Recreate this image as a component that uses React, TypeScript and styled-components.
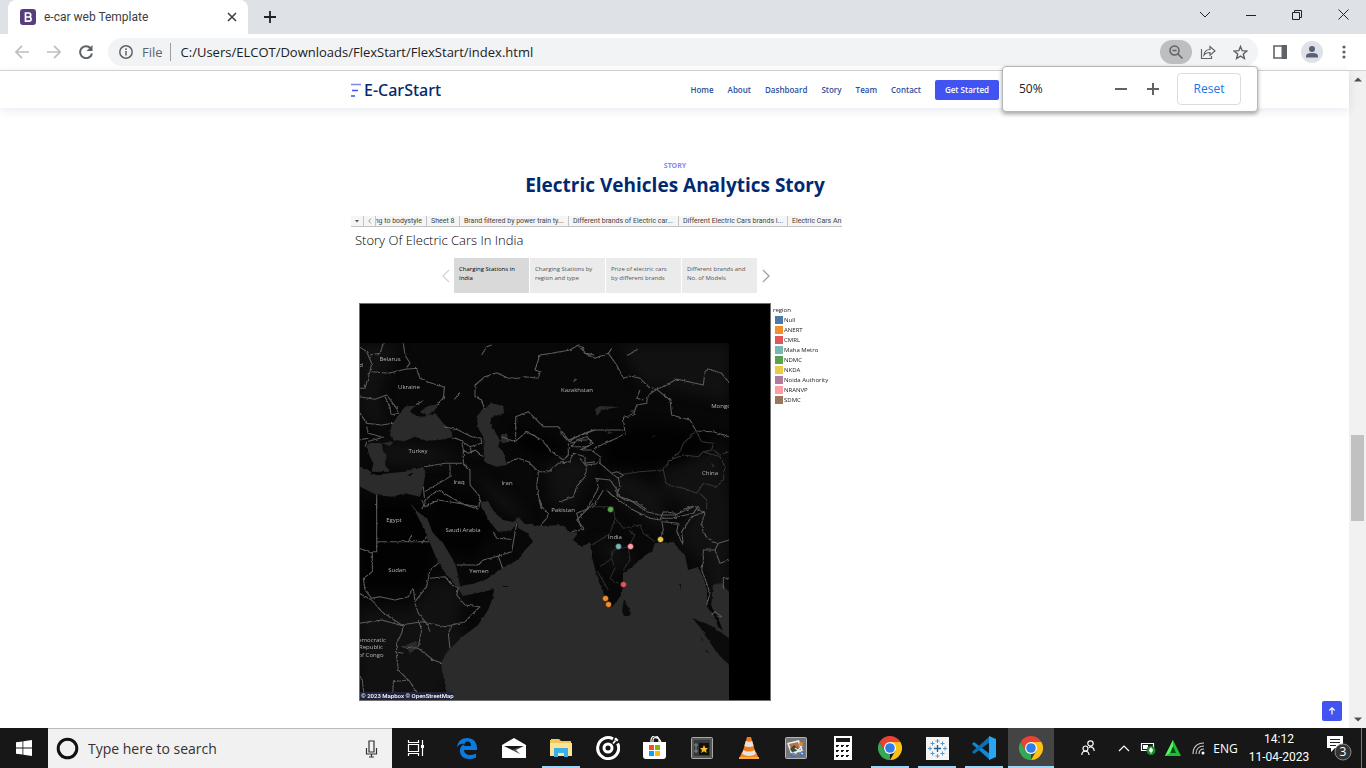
import React from 'react';
import styled, { createGlobalStyle } from 'styled-components';

const UI = '"Open Sans", "Noto Sans", sans-serif';

const Global = createGlobalStyle`
  * { box-sizing: border-box; }
  body { margin: 0; background: #fff; font-family: ${UI}; color: #202124; }
  button { border: 0; padding: 0; margin: 0; background: none; font: inherit; color: inherit; display: flex; align-items: center; justify-content: center; }
  a { text-decoration: none; color: inherit; }
  svg { display: block; flex: none; }
  h1, h2, p, ul { margin: 0; padding: 0; }
`;

const Desktop = styled.div`display: flex; flex-direction: column; min-height: 100vh; overflow: hidden;`;

/* browser frame */
const TabStrip = styled.div`display: flex; height: 34px; background: #dee1e6; padding-left: 8px;`;
const Tab = styled.div`
  display: flex; align-items: center; width: 240px; padding: 0 10px 0 12px;
  background: #fff; border-radius: 8px 8px 0 0; font-size: 12px; color: #3c4043;
`;
const TabTitle = styled.span`flex: 1; margin-left: 8px; font-family: Roboto, sans-serif; white-space: nowrap;`;
const NewTab = styled.button`width: 44px;`;
const WindowButtons = styled.div`display: flex; margin-left: auto; height: 29px;`;
const WindowButton = styled.button`width: 46px;`;

const Toolbar = styled.div`
  position: relative; display: flex; align-items: center; height: 37px; padding: 0 6px;
  background: #fff; border-bottom: 1px solid #d5d6d8;
`;
const ToolButton = styled.button<{ $w?: number }>`width: ${p => p.$w ?? 32}px; height: 32px; color: #5f6368;`;
const Omnibox = styled.div`
  display: flex; align-items: center; flex: 1; height: 28px; margin-left: 6px; padding: 0 2px 0 10px;
  border-radius: 14px; background: #f1f3f4;
`;
const Scheme = styled.span`
  margin-left: 8px; padding-right: 7px; border-right: 1px solid #9aa0a6; font: 13px/18px ${UI}; color: #5f6368;
`;
const Address = styled.input`
  flex: 1; min-width: 0; border: 0; outline: 0; background: none; padding: 0 0 0 10px; font: 13px/20px ${UI}; color: #202124;
`;
const ZoomButton = styled.button`width: 32px; height: 24px; border-radius: 12px; background: #bdbec0; color: #5f6368;`;
const Avatar = styled.button`width: 22px; height: 22px; margin-right: 5px; border-radius: 50%; background: #dee1e6;`;

const ZoomPopup = styled.div`
  position: absolute; z-index: 5; top: 32px; right: 108px; display: flex; align-items: center;
  width: 256px; height: 46px; padding: 0 16px; background: #fff; border: 1px solid #b4b6b8; border-radius: 4px;
  box-shadow: 0 2px 4px rgba(0,0,0,.35); font: 12px/16px ${UI};
`;
const ZoomValue = styled.span`flex: 1;`;
const ZoomStep = styled.button`width: 32px; height: 32px;`;
const ResetButton = styled.button`
  width: 64px; height: 32px; margin-left: 8px; border: 1px solid #dadce0; border-radius: 4px; color: #1a73e8;
`;

/* page */
const Viewport = styled.div`display: flex; flex: 1;`;
const Page = styled.main`position: relative; flex: 1; min-width: 0; background: #fff;`;
const ScrollTrack = styled.div`
  display: flex; flex-direction: column; align-items: center; width: 17px; background: #f1f1f1;
`;
const ScrollSpace = styled.div<{ $grow: number }>`flex: ${p => p.$grow} 1 0;`;
const ScrollThumb = styled.div`width: 13px; height: 86px; background: #c1c1c1;`;
const ScrollArrow = styled.button`width: 17px; height: 17px;`;

const SiteHeader = styled.header`height: 37px; background: #fff; box-shadow: 0 2px 10px rgba(1,41,112,.1);`;
const Container = styled.div`width: 649px; max-width: 100%; margin: 0 auto; padding-left: 1px;`;
const HeaderRow = styled(Container)`display: flex; align-items: center; height: 37px;`;
const Logo = styled.a`
  display: flex; align-items: center; gap: 3px; margin-right: auto; color: #012970;
  font: 500 16px/18px "Noto Sans", sans-serif;
`;
const Nav = styled.nav`display: flex; align-items: center; gap: 14px; font: 600 8px/10px "Open Sans", sans-serif; color: #2d4f98;`;
const GetStarted = styled.a`
  display: flex; align-items: center; justify-content: center; width: 64px; height: 20px; border-radius: 2px;
  background: #4154f1; color: #fff;
`;

const Story = styled.section`padding-top: 53px;`;
const SectionHead = styled.header`text-align: center;`;
const Kicker = styled.h2`font: 700 7px/10px "Noto Sans", sans-serif; color: #7f8bf5;`;
const Title = styled.p`margin-top: 1px; font: 700 19px/26px "Open Sans", sans-serif; color: #012970;`;

const Viz = styled.div`width: 491px; margin-top: 18px; overflow: hidden;`;
const SheetTabs = styled.div`
  display: flex; height: 11px; background: #f5f5f5; border-bottom: 1px solid #c4c4c4; font: 7px/8px Roboto, sans-serif; color: #444;
`;
const SheetTab = styled.button<{ $w: number; $clip?: boolean }>`
  flex: none; width: ${p => p.$w}px; justify-content: ${p => (p.$clip ? 'flex-end' : 'flex-start')};
  padding: 0 4px 0 ${p => (p.$clip ? 0 : 4)}px; border-right: 1px solid #c4c4c4; white-space: nowrap; overflow: hidden;
`;
const SheetIcon = styled(SheetTab)`justify-content: center; padding: 0;`;
const VizTitle = styled.p`margin: 3px 0 0 4px; font: 300 13px/20px "Open Sans", sans-serif; color: #000;`;

const Points = styled.div`display: flex; align-items: center; justify-content: center; margin: 8px 0 10px; padding: 0 18px 0 36px;`;
const PointList = styled.div`display: flex; gap: 1px; margin: 0 4px;`;
const Point = styled.button<{ $on?: boolean }>`
  width: 75px; height: 35px; padding: 7px 5px; align-items: flex-start; justify-content: flex-start; text-align: left;
  background: ${p => (p.$on ? '#d9d9d9' : '#ebebeb')}; color: ${p => (p.$on ? '#000' : '#555')};
  font: 6px/9px "Open Sans", sans-serif; white-space: pre-line;
`;
const Arrow = styled.button`width: 9px; height: 20px;`;

const VizBody = styled.div`display: flex; padding-left: 8px;`;
const Legend = styled.ul`margin: 2px 0 0 2px; list-style: none; font: 6px/10px "Open Sans", sans-serif; color: #222;`;
const LegendItem = styled.li`display: flex; align-items: center; gap: 1px; height: 10px; padding-left: 2px; white-space: nowrap;`;
const Swatch = styled.span<{ $c: string }>`width: 8px; height: 8px; background: ${p => p.$c};`;

const BackToTop = styled.a`
  position: absolute; right: 7px; bottom: 7px; display: flex; align-items: center; justify-content: center;
  width: 20px; height: 20px; border-radius: 2px; background: #4154f1;
`;

/* taskbar */
const Taskbar = styled.footer`display: flex; height: 40px; background: #171717; color: #fff;`;
const StartButton = styled.button`width: 48px; height: 40px;`;
const Search = styled.label`
  display: flex; align-items: center; width: 344px; height: 40px; padding: 0 12px 0 8px; background: #f1f1f1; border-top: 1px solid #b9b9b9;
`;
const SearchInput = styled.input`
  flex: 1; min-width: 0; margin-left: 9px; padding: 0; border: 0; outline: 0; background: none; font: 14px/20px ${UI};
  &::placeholder { color: #333; opacity: 1; }
`;
const AppRow = styled.div`display: flex; gap: 1px; margin-left: 4px;`;
const AppButton = styled.button<{ $open?: boolean; $active?: boolean }>`
  position: relative; width: 46px; height: 40px; background: ${p => (p.$active ? '#444' : 'none')};
  &::after {
    content: ''; position: absolute; bottom: 0; height: 2px; left: ${p => (p.$active ? 0 : 4)}px; right: ${p => (p.$active ? 0 : 4)}px;
    background: ${p => (p.$open || p.$active ? '#9fd5f7' : 'none')};
  }
`;
const Tray = styled.div`display: flex; margin-left: auto;`;
const TrayItem = styled.button<{ $w: number }>`width: ${p => p.$w}px; height: 40px; font-size: 12px;`;
const Clock = styled.div`width: 76px; padding-top: 2px; text-align: center; font: 12px/18px Roboto, "Open Sans", sans-serif;`;
const ShowDesktop = styled.button`width: 5px; height: 40px; border-left: 1px solid #777;`;

const line = { fill: 'none', stroke: 'currentColor' } as const;

const Chrome = () => (
  <svg width="24" height="24" viewBox="0 0 24 24">
    <path d="M12 12V24A12 12 0 0 1 1.600 6L7 15Z" fill="#34a853" />
    <path d="M12 6H22.400A12 12 0 0 1 12 24L17.200 15Z" fill="#fbc116" />
    <path d="M1.600 6A12 12 0 0 1 22.400 6H12L7 9 6.800 15Z" fill="#ea4335" />
    <circle cx="12" cy="12" r="6" fill="#fff" />
    <circle cx="12" cy="12" r="4.800" fill="#2f7de9" />
  </svg>
);

const Edge = () => (
  <svg width="22" height="22" viewBox="0 0 22 22">
    <path d="M1 10C2 4 6 1 11 1c6 0 10 4 10 10v2H8c0 3 3 5 6 5 2 0 4-.5 6-1.500v4c-2 1-4 1.500-7 1.500-5 0-9-3-9-8 0-4 2-6 5-7C6 6 3 7 1 10Zm7-1h7c0-3-1-4.500-3.500-4.500S8.500 6.500 8 9Z" fill="#0b7bdb" />
  </svg>
);

const Mail = () => (
  <svg width="24" height="20" viewBox="0 0 24 20">
    <path d="M0 7 12 0l12 7v13H0Z" fill="#fff" />
    <path d="M2 8h20l-8 4 4 4Z" fill="#181818" />
    <path d="m10 12 4-1.500L24 7v2l-8 3 2 4Z" fill="#fff" opacity=".25" />
  </svg>
);

const Explorer = () => (
  <svg width="22" height="20" viewBox="0 0 22 20">
    <path d="M0 2h1V1h8l2 2h10v15H0Z" fill="#f0c75a" />
    <path d="M0 5h22v13H0Z" fill="#fde394" />
    <path d="M4 10h14v9h-4v-4H8v4H4Z" fill="#38b0e8" />
  </svg>
);

const Groove = () => (
  <svg width="24" height="24" viewBox="0 0 24 24" fill="none" stroke="#fff">
    <path d="M17 2.800A10.500 10.500 0 1 0 21.600 7.500" strokeWidth="3" />
    <circle cx="12" cy="12" r="4" strokeWidth="3" />
    <path d="M17 7.500 19.500 4.500" strokeWidth="1.800" />
    <path d="m18 3 2-1.500 2.500 2.500-1.500 1.500Z" fill="#fff" stroke="none" />
  </svg>
);

const Store = () => (
  <svg width="24" height="24" viewBox="0 0 24 24">
    <path d="M8 7V4a4 4 0 0 1 8 0v3M10 6V4c0-4 6-3 8 2" fill="none" stroke="#fff" strokeWidth="1.200" />
    <path d="M0 6h23v14q0 3-3 3H3q-3 0-3-3Z" fill="#fff" />
    <path d="M6 9h5v5H6Z" fill="#f25022" /><path d="M12 9h5v5h-5Z" fill="#7fba00" />
    <path d="M6 15h5v5H6Z" fill="#00a4ef" /><path d="M12 15h5v5h-5Z" fill="#ffb900" />
  </svg>
);

const Safe = () => (
  <svg width="22" height="22" viewBox="0 0 22 22">
    <rect x=".5" y=".5" width="21" height="21" rx="1" fill="#555" stroke="#aaa" />
    <path d="M3 3h16v16H3Z" fill="#36393c" /><path d="M8 6h10v12H8Z" fill="#111" />
    <path d="M5 6v10M3 8h4M3 14h4" stroke="#888" />
    <path d="m13 8 1.300 3H17l-2 2 .8 3-2.800-1.700L10.200 16l.8-3-2-2h2.700Z" fill="#fbc11c" />
  </svg>
);

const Vlc = () => (
  <svg width="22" height="24" viewBox="0 0 22 24">
    <path d="M4 16h14l3 7H1Z" fill="#f58a1f" />
    <path d="M9 1h4l5 17q-7 4-14 0Z" fill="#f47b16" />
    <path d="m7.800 5-1.400 5q4.600 2 9.200 0l-1.400-5q-3 1.500-6.400 0ZM5.200 14l-1 4q7 4 13.600 0l-1-4q-6 3-11.600 0Z" fill="#e4e4e4" />
    <path d="M1 21h20v2H1Z" fill="#ffab45" />
  </svg>
);

const Snip = () => (
  <svg width="22" height="22" viewBox="0 0 22 22">
    <rect x=".5" y=".5" width="21" height="21" rx="1" fill="#74777a" stroke="#b5b5b5" />
    <path d="m2 6 12-3 4 11-12 3Z" fill="#eee" /><path d="m4 7 9-2 3 8-9 2Z" fill="#b5754a" />
    <path d="m5 12 4-4 6 5-8 2Z" fill="#3c4c2e" />
    <path d="m9 18 8-9M10 11l8 6" stroke="#dfe8f2" strokeWidth="1.500" />
    <circle cx="16" cy="7" r="2" fill="#e0862c" /><circle cx="8" cy="18" r="2" fill="none" stroke="#2c6fd0" /><circle cx="17" cy="17" r="2" fill="none" stroke="#2c6fd0" />
  </svg>
);

const Calculator = () => (
  <svg width="18" height="24" viewBox="0 0 18 24">
    <path d="M0 0h18v24H0Z" fill="#fff" /><path d="M2 2h14v4H2Z" fill="#181818" />
    {[9, 14, 19].map(y => [3, 8, 13].map(x => <path key={`${x}-${y}`} d={`M${x - 1} ${y}h3v1h-1v1h-2Z`} fill="#181818" />))}
  </svg>
);

const Tableau = () => (
  <svg width="23" height="23" viewBox="0 0 23 23">
    <path d="M0 0h23v23H0Z" fill="#f5f5f5" />
    <path d="M11.500 8v7M8 11.500h7" stroke="#1c5f96" strokeWidth="1.300" />
    <path d="M11.500 2v4M9.500 4h4M11.500 17v4M9.500 19h4M2 11.500h4M4 9.500v4M17 11.500h4M19 9.500v4M6.500 4.500v4M4.500 6.500h4M16.500 4.500v4M14.500 6.500h4M6.500 14.500v4M4.500 16.500h4M16.500 14.500v4M14.500 16.500h4" stroke="#5b97c4" />
  </svg>
);

const VsCode = () => (
  <svg width="24" height="24" viewBox="0 0 24 24">
    <path d="m0 8 2-2 16 12v6Z" fill="#1287d2" /><path d="m0 16 2 2L18 6V0Z" fill="#0a70b8" />
    <path d="m17 0 7 3v18l-7 3Z" fill="#27a7f0" />
  </svg>
);

const marks: [number, number, string][] = [
  [610, 509, '#5aa74c'], [618, 546, '#76b7b2'], [630, 546, '#ff9da7'], [660, 539, '#edc948'],
  [623, 584, '#e15759'], [605, 598, '#f28e2b'], [608, 604, '#f28e2b'],
];
const places: [number, number, string][] = [
  [390, 361, 'Belarus'], [409, 389, 'Ukraine'], [577, 392, 'Kazakhstan'], [418, 453, 'Turkey'], [459, 484, 'Iraq'],
  [507, 485, 'Iran'], [563, 512, 'Pakistan'], [394, 522, 'Egypt'], [463, 532, 'Saudi Arabia'], [397, 572, 'Sudan'],
  [479, 573, 'Yemen'], [615, 539, 'India'], [710, 475, 'China'], [721, 408, 'Mongo'], [372, 642, 'emocratic'],
  [371, 649, 'Republic'], [371, 657, 'of Congo'], [361, 367, 'd'],
];

const MapView = () => (
  <svg width="412" height="398" viewBox="359 303 412 398" role="img" aria-label="Map of charging stations">
    <defs>
      <clipPath id="tiles"><rect x="360" y="343" width="369" height="357" /></clipPath>
      <filter id="rough" x="0" y="0" width="100%" height="100%" colorInterpolationFilters="sRGB">
        <feTurbulence type="fractalNoise" baseFrequency=".3" numOctaves="1" seed="4" />
        <feDisplacementMap in="SourceGraphic" scale="3" xChannelSelector="R" yChannelSelector="G" />
      </filter>
      <filter id="soft" x="-20%" y="-20%" width="140%" height="140%" colorInterpolationFilters="sRGB"><feGaussianBlur stdDeviation="6" /></filter>
    </defs>
    <rect x="359" y="303" width="412" height="398" fill="#000" />
    <g clipPath="url(#tiles)">
      <rect x="359" y="343" width="371" height="358" fill="#080808" />
      <g filter="url(#soft)" fill="#111">
        <path d="M620 343h110v60l-40-10-50-10ZM359 343h40l-20 50 10 40-30-20ZM380 440l60 8 20 10-40 10-40-5ZM470 470l30 20 30 30-30-10ZM545 460l30-5 20 10-25 45-20-10ZM600 480l50 45 30 5 10-20-30-20-40-20ZM660 460l60-20 15 90-40 30-30-40ZM359 610h90l20 30-30 60h-80ZM425 575l40 15-10 40-50 0ZM595 540l20 5 20 15-20 10ZM695 520l35 10v60l-20 10Z" />
      </g>
      <g fill="#020202" filter="url(#soft)"><path d="M600 440l40-15 60 5 20 15-50 22-60 0ZM510 425l35 10 20 15-15 10-30-10ZM360 500h60l15 45-10 45h-65ZM430 485l40 10 30 30-30 35-35-15Z" /></g>
      <g filter="url(#rough)">
        <g fill="#2b2b2b">
          <path d="M447 701 446 687 442 670 441 663 447 652 462 637 478 625 488 610 493 597 494 589 482 592 463 596 459 590 455 585 443 570 437 560 430 543 423 527 417 515 410 503 418 512 427 518 433 533 443 543 455 563 458 575 460 586 472 584 487 579 502 568 518 560 525 550 533 542 527 533 518 528 517 522 512 530 498 532 490 522 482 508 480 502 488 501 493 510 503 520 513 522 518 517 525 524 542 526 562 525 570 532 578 533 573 540 582 547 590 542 592 557 597 577 605 597 608 605 612 607 620 597 623 588 623 573 632 567 643 557 653 550 655 543 673 542 680 550 685 555 688 570 698 567 703 577 707 590 707 607 715 617 718 627 733 637V703Z" />
          <path d="M713 585 722 583 733 597V638L723 631 718 618 711 606Z" />
          <g transform="translate(355 300) scale(.333333)">
            <path d="M105 405 110 375 130 345 150 320 182 315 165 335 185 348 205 350 240 340 265 370 290 395 292 412 255 420 215 422 180 410 150 423 115 420ZM195 335 220 318 250 313 240 330 215 348Z" />
            <path d="M365 350 385 325 410 310 445 318 447 340 410 352 405 370 420 395 435 420 430 440 445 455 455 495 425 500 395 490 387 470 385 435 385 410 370 385ZM437 405 455 400 465 425 440 430Z" />
            <path d="M5 480 15 500 40 510 60 525 100 520 150 515 175 505 205 503 212 515 205 560 195 590 150 580 110 590 65 585 5 555ZM35 435 45 428 80 430 85 455 95 465 90 495 105 515 50 515 55 490 42 465ZM80 430 115 425 105 438Z" />
          </g>
          <path d="M406 645 416 641 418 647 410 654ZM595 409 600 406 619 407 602 410 597 416ZM631 409 635 411 632 414ZM608 431 613 433 607 434ZM653 436 656 435 652 438ZM711 463 716 466 712 467Z" />
        </g>
        <g fill="#0b0b0b">
          <path d="M624 599 631 612 629 616 624 616 622 611ZM692 618 710 625 733 641V669L717 653 707 638 700 627ZM680 583 681 585 680 591ZM503 586h5v1h-5ZM701 637 703 640 702 641ZM706 649 709 653 707 652Z" />
          <path d="M370 473h12v2h-12ZM406 475l8-2-4 3Z" fill="#050505" />
        </g>
        <g fill="none" stroke="#5c5c5c" strokeWidth="3.200" strokeLinejoin="round">
          <g transform="translate(355 300) scale(.333333)">
            <path d="M12 140 35 155 50 190 45 215 30 265 12 265M85 130 75 160 45 165M145 130 150 165 165 190 150 208 185 205 195 235 230 250 268 262 265 295 245 315M50 215 100 220 150 208M12 290 60 298 95 285 125 325 130 340 108 345 105 320 90 290M12 335 35 370 80 375 115 370M35 380 40 400 85 412 35 425 30 440M12 420 40 415M268 380 310 390 350 410 378 415 380 430 345 440 315 420 292 412M320 425 325 450 340 460 360 450 385 470M345 440 350 460M325 450 325 490 345 510 345 555 375 590 372 620M210 500 270 490 320 490M285 495 285 530 210 575M210 600 250 570 285 590 330 615 370 628M205 560 210 610 200 628M65 585 65 628" />
            <path d="M388 325 380 300 360 290 360 255 390 230 425 218 460 235 490 235 510 230 550 235 555 215 540 210 555 165 590 160 645 150 670 135 690 160 720 165M380 165 395 140 410 135M482 418V350L520 335 565 380 610 380 640 420 680 405 720 390M440 410 480 425 515 395 560 420 590 455 625 480 640 465 640 430M455 490 490 475 520 485 550 515 545 560 555 610 560 628M550 515 580 515 610 490 645 485 655 460 690 470 690 490 720 485M645 430 680 420 710 420 700 440 650 440" />
            <path d="M180 315 205 302M298 298 315 278M655 245 665 238" />
          </g>
          <g transform="translate(560 300) scale(.333333)">
            <path d="M65 138 75 160 105 175 145 160 170 195 190 235 210 228 240 235 265 260 290 268 320 255 350 237 385 245 430 255 435 215 445 207 485 220 507 248M145 160 155 145M205 165 233 148M290 268 265 285 260 310 230 315 220 345 190 352 195 400 170 415 110 440 100 455 120 470 120 490 155 520 175 535 180 560 170 585 195 600 225 605 260 628M290 268 330 300 335 345 390 360 408 393 460 395 507 410M0 395 25 425 60 405 100 390 190 390M35 440 50 420 80 410 100 430 60 450 95 450M60 475 80 500 75 530 50 560 40 590 0 605M80 495 120 490M110 535 115 565 90 610 80 628M105 535 150 540 175 575M155 520 170 515 190 525 175 535M240 270 230 295 250 300M370 628 400 618 420 625" />
            <path d="M190 523 240 515 310 510 330 480 360 455 370 430 408 393 425 425 460 430 455 450 430 455 415 470 370 465 330 480M310 510 320 555 370 565 410 580 430 550 470 560 490 540 495 500 480 470 430 455M420 580 440 600 440 628M460 450 480 465 507 455" stroke="#343434" />
          </g>
          <g transform="translate(355 500) scale(.333333)">
            <path d="M65 0V125H225M65 125V155H52V215L25 235 30 270 50 295 75 290 120 300 160 290 175 265 180 305 215 260 225 210 250 190M12 145 52 160M50 300 80 335 140 375 200 365 270 380 330 365 375 320 330 315 305 285 310 265 290 255 270 230 225 235M12 280 50 300M12 370 80 360 145 378M180 310 190 340 215 370 225 395M145 375 140 400 125 430 125 470 130 510 165 545 180 570 195 585 195 600M140 440 190 445 235 480 262 490M190 360 200 390 190 440M290 378 280 400 285 445M120 455 145 460M112 600 115 545 160 540M12 525 22 540 28 595M305 195 370 195 385 180 430 168 470 155 478 110 485 70M430 168 443 205M415 95 425 115 470 118M200 0 210 20 250 0 310 10 370 20M555 0 560 20 580 40 575 55 557 75M650 95 690 88 665 60 690 35 715 10M160 125 170 105M200 130 215 110" />
          </g>
          <g transform="translate(560 490) scale(.333333)">
            <path d="M165 0 180 20 210 30 260 65 300 75 345 75 400 50M190 40 220 60 270 85 300 90 310 65 345 70 350 85 305 85M190 40 155 15 140 0M305 90 310 120 300 145M310 95 355 100 350 125 370 165M355 80 400 70 410 55 435 70 425 100 430 130 455 155 475 160 507 150M370 165 365 125 395 80 435 65M475 160 465 180 430 180 430 215 425 240 440 280 450 310 440 345M465 180 480 220 507 210M507 265 490 265 490 295M65 120 50 70 100 50 130 0M455 375 465 365 485 380 470 382" />
            <path d="M100 50 160 50 165 85 150 130 120 150M165 85 190 115 240 105 250 130 285 155M120 150 95 165M160 180 155 205 120 230M160 180 205 170 210 210 190 240M205 120 225 135 205 170M155 205 165 235 150 265 175 280M110 240 145 300" stroke="#2c2c2c" />
          </g>
        </g>
      </g>
      <g fill="#b4b4b4" fontFamily="Open Sans, sans-serif" fontSize="6" textAnchor="middle">
        {places.map(([x, y, t]) => <text key={t} x={x} y={y}>{t}</text>)}
      </g>
      <rect x="360" y="692" width="94" height="8" fill="#20233c" />
      <text x="361" y="698" fill="#fff" fontFamily="Roboto, sans-serif" fontSize="6" fontWeight="500">© 2023 Mapbox  © OpenStreetMap</text>
    </g>
    {marks.map(([x, y, c]) => <circle key={`${x}-${y}`} cx={x + 0.500} cy={y + 0.500} r="3" fill={c} stroke="#111" strokeWidth=".5" />)}
    <rect x="359.500" y="303.500" width="411" height="397" fill="none" stroke="#707070" />
  </svg>
);

const legend: [string, string][] = [
  ['Null', '#4e79a7'], ['ANERT', '#f28e2b'], ['CMRL', '#e15759'], ['Maha Metro', '#76b7b2'], ['NDMC', '#59a14f'],
  ['NKDA', '#edc948'], ['Noida Authority', '#b07aa1'], ['NRANVP', '#ff9da7'], ['SDMC', '#9c755f'],
];

export default function App() {
  return (
    <Desktop>
      <Global />
      <TabStrip>
        <Tab>
          <svg width="16" height="16" viewBox="0 0 16 16">
            <rect width="16" height="16" rx="3" fill="#563d7c" />
            <path d="M5.500 4h3.200a2 2 0 0 1 0 4H5.500h3.500a2.100 2.100 0 0 1 0 4.200H5.500Z" fill="none" stroke="#fff" strokeWidth="1.700" />
          </svg>
          <TabTitle>e-car web Template</TabTitle>
          <button aria-label="Close tab"><svg width="12" height="12" viewBox="0 0 12 12" {...line} strokeWidth="1.600"><path d="m2 2 8 8M10 2l-8 8" /></svg></button>
        </Tab>
        <NewTab aria-label="New tab"><svg width="12" height="12" viewBox="0 0 12 12" {...line} strokeWidth="1.800"><path d="M6 0v12M0 6h12" /></svg></NewTab>
        <WindowButtons>
          <WindowButton aria-label="Search tabs"><svg width="12" height="8" viewBox="0 0 12 8" {...line}><path d="m1 1 5 5 5-5" /></svg></WindowButton>
          <WindowButton aria-label="Minimize"><svg width="10" height="10" viewBox="0 0 10 10" {...line}><path d="M0 5.500h10" /></svg></WindowButton>
          <WindowButton aria-label="Restore"><svg width="10" height="10" viewBox="0 0 10 10" {...line}><path d="M.5 2.500h7v7h-7ZM2.500 2V.5h7v7H8" /></svg></WindowButton>
          <WindowButton aria-label="Close"><svg width="11" height="11" viewBox="0 0 11 11" {...line}><path d="m.5.5 10 10M10.500.5l-10 10" /></svg></WindowButton>
        </WindowButtons>
      </TabStrip>

      <Toolbar>
        <ToolButton aria-label="Back"><svg width="14" height="14" viewBox="0 0 14 14" fill="none" stroke="#bcbec1" strokeWidth="1.700"><path d="M14 7H1M7 .8.900 7 7 13.200" /></svg></ToolButton>
        <ToolButton aria-label="Forward"><svg width="14" height="14" viewBox="0 0 14 14" fill="none" stroke="#bcbec1" strokeWidth="1.700"><path d="M0 7h13M7 .8 13.100 7 7 13.200" /></svg></ToolButton>
        <ToolButton aria-label="Reload"><svg width="14" height="14" viewBox="0 0 14 14" {...line} strokeWidth="2"><path d="M11.500 3A6 6 0 1 0 13 8.500" /><path d="M13.500 0v6h-6Z" fill="currentColor" stroke="none" /></svg></ToolButton>
        <Omnibox>
          <svg width="16" height="16" viewBox="0 0 16 16" fill="none" stroke="#5f6368" strokeWidth="1.500"><circle cx="8" cy="8" r="6.200" /><path d="M8 7v4.500M8 4.300V6" /></svg>
          <Scheme>File</Scheme>
          <Address aria-label="Address" defaultValue="C:/Users/ELCOT/Downloads/FlexStart/FlexStart/index.html" />
          <ZoomButton aria-label="Zoom"><svg width="14" height="14" viewBox="0 0 14 14" {...line} strokeWidth="1.500"><circle cx="5.500" cy="5.500" r="4.500" /><path d="m9 9 4.500 4.500M3.500 5.500h4" /></svg></ZoomButton>
          <ToolButton aria-label="Share"><svg width="16" height="16" viewBox="0 0 16 16" {...line} strokeWidth="1.200"><path d="M1.500 5v9.500h10V12M4 11c.5-4 3-5.500 6-5.500V2.500L15 7l-5 4.300V8.500C7.500 8.500 5.500 9 4 11Z" /></svg></ToolButton>
          <ToolButton aria-label="Bookmark"><svg width="15" height="15" viewBox="0 0 15 15" {...line} strokeWidth="1.400"><path d="m7.500 1.500 1.700 4.200 4.600.3-3.500 3 1.100 4.500-3.900-2.400-3.900 2.400L4.700 9 1.200 6l4.600-.3Z" /></svg></ToolButton>
        </Omnibox>
        <ToolButton $w={43} aria-label="Side panel"><svg width="14" height="14" viewBox="0 0 14 14" {...line} strokeWidth="1.600"><path d="M1 1h12v12H1Z" /><path d="M8.500 0H14v14H8.500Z" fill="currentColor" stroke="none" /></svg></ToolButton>
        <Avatar aria-label="Profile"><svg width="14" height="14" viewBox="0 0 14 14" fill="#566077"><circle cx="7" cy="4" r="3" /><path d="M1 12.500V11q0-3 6-3t6 3v1.500Z" /></svg></Avatar>
        <ToolButton aria-label="Menu"><svg width="4" height="14" viewBox="0 0 4 14" fill="currentColor"><circle cx="2" cy="2" r="1.600" /><circle cx="2" cy="7" r="1.600" /><circle cx="2" cy="12" r="1.600" /></svg></ToolButton>
        <ZoomPopup>
          <ZoomValue>50%</ZoomValue>
          <ZoomStep aria-label="Zoom out"><svg width="12" height="12" viewBox="0 0 12 12" stroke="#5f6368" strokeWidth="2"><path d="M0 6h12" /></svg></ZoomStep>
          <ZoomStep aria-label="Zoom in"><svg width="12" height="12" viewBox="0 0 12 12" stroke="#5f6368" strokeWidth="2"><path d="M0 6h12M6 0v12" /></svg></ZoomStep>
          <ResetButton>Reset</ResetButton>
        </ZoomPopup>
      </Toolbar>

      <Viewport>
        <Page>
          <SiteHeader>
            <HeaderRow>
              <Logo href="#home">
                <svg width="10" height="14" viewBox="0 0 10 14" fill="none" strokeWidth="1.500"><path d="M0 1.500h10" stroke="#7a87f5" /><path d="M1 7.500h6M0 13h4" stroke="#4154f1" /></svg>
                E-CarStart
              </Logo>
              <Nav>
                {['Home', 'About', 'Dashboard', 'Story', 'Team', 'Contact'].map(t => <a key={t} href={`#${t.toLowerCase()}`}>{t}</a>)}
                <GetStarted href="#about">Get Started</GetStarted>
              </Nav>
            </HeaderRow>
          </SiteHeader>
          <Story>
            <Container>
              <SectionHead><Kicker>STORY</Kicker><Title>Electric Vehicles Analytics Story</Title></SectionHead>
              <Viz>
                <SheetTabs>
                  <SheetIcon $w={13} aria-label="All sheets"><svg width="4" height="3" viewBox="0 0 4 3"><path d="M0 0h4L2 2.500Z" fill="#555" /></svg></SheetIcon>
                  <SheetIcon $w={12} aria-label="Previous sheets"><svg width="4" height="6" viewBox="0 0 4 6" fill="none" stroke="#999"><path d="M3 .5.800 3 3 5.500" /></svg></SheetIcon>
                  <SheetTab $w={51} $clip>ng to bodystyle</SheetTab>
                  <SheetTab $w={33}>Sheet 8</SheetTab>
                  <SheetTab $w={109}>Brand filtered by power train ty...</SheetTab>
                  <SheetTab $w={110}>Different brands of Electric car...</SheetTab>
                  <SheetTab $w={109}>Different Electric Cars brands i...</SheetTab>
                  <SheetTab $w={55}>Electric Cars An</SheetTab>
                </SheetTabs>
                <VizTitle>Story Of Electric Cars In India</VizTitle>
                <Points>
                  <Arrow aria-label="Previous point"><svg width="8" height="14" viewBox="0 0 8 14" fill="none" stroke="#d4d4d4" strokeWidth="1.300"><path d="M7 1 1 7l6 6" /></svg></Arrow>
                  <PointList>
                    <Point $on>{'Charging Stations in\nIndia'}</Point>
                    <Point>{'Charging Stations by\nregion and type'}</Point>
                    <Point>{'Prize of electric cars\nby different brands'}</Point>
                    <Point>{'Different brands and\nNo. of Models'}</Point>
                  </PointList>
                  <Arrow aria-label="Next point"><svg width="8" height="14" viewBox="0 0 8 14" fill="none" stroke="#a0a0a0" strokeWidth="1.300"><path d="m1 1 6 6-6 6" /></svg></Arrow>
                </Points>
                <VizBody>
                  <MapView />
                  <Legend>
                    <li>region</li>
                    {legend.map(([name, c]) => <LegendItem key={name}><Swatch $c={c} />{name}</LegendItem>)}
                  </Legend>
                </VizBody>
              </Viz>
            </Container>
          </Story>
          <BackToTop href="#top" aria-label="Back to top"><svg width="8" height="8" viewBox="0 0 8 8" fill="none" stroke="#fff" strokeWidth="1.200"><path d="M4 7.500V1M1.300 3.500 4 .9l2.700 2.600" /></svg></BackToTop>
        </Page>
        <ScrollTrack>
          <ScrollArrow aria-label="Scroll up"><svg width="8" height="5" viewBox="0 0 8 5"><path d="M0 4.500 4 .5l4 4Z" fill="#505050" /></svg></ScrollArrow>
          <ScrollSpace $grow={347} /><ScrollThumb /><ScrollSpace $grow={190} />
          <ScrollArrow aria-label="Scroll down"><svg width="8" height="5" viewBox="0 0 8 5"><path d="M0 .5h8l-4 4Z" fill="#505050" /></svg></ScrollArrow>
        </ScrollTrack>
      </Viewport>

      <Taskbar>
        <StartButton aria-label="Start"><svg width="16" height="16" viewBox="0 0 16 16" fill="#fff"><path d="M0 2.300 6.500 1.400v6.200H0ZM7.300 1.300 16 0v7.600H7.300ZM0 8.400h6.500v6.200L0 13.700ZM7.300 8.400H16V16l-8.700-1.300Z" /></svg></StartButton>
        <Search>
          <svg width="23" height="23" viewBox="0 0 23 23"><circle cx="11.500" cy="11.500" r="9.300" fill="none" stroke="#111" strokeWidth="3" /></svg>
          <SearchInput aria-label="Search" placeholder="Type here to search" />
          <svg width="16" height="18" viewBox="0 0 16 18" fill="none" stroke="#333" strokeWidth="1.200"><path d="M5 1h5v11H5ZM2.500 8v6h10V8M7.500 14v3M5 17h5" /></svg>
        </Search>
        <StartButton aria-label="Task view"><svg width="18" height="16" viewBox="0 0 18 16" fill="none" stroke="#fff"><path d="M1.500 4.500h10v7h-10ZM1.500 0v2.500h10V0M1.500 16v-2.500h10V16M15.500 0v16" strokeWidth="1.200" /><path d="M14 5h3v3h-3Z" fill="#fff" stroke="none" /></svg></StartButton>
        <AppRow>
          <AppButton aria-label="Edge"><Edge /></AppButton>
          <AppButton aria-label="Mail"><Mail /></AppButton>
          <AppButton $open aria-label="File Explorer"><Explorer /></AppButton>
          <AppButton aria-label="Groove Music"><Groove /></AppButton>
          <AppButton aria-label="Store"><Store /></AppButton>
          <AppButton aria-label="Safe"><Safe /></AppButton>
          <AppButton aria-label="VLC"><Vlc /></AppButton>
          <AppButton aria-label="Pictures"><Snip /></AppButton>
          <AppButton aria-label="Calculator"><Calculator /></AppButton>
          <AppButton $open aria-label="Chrome"><Chrome /></AppButton>
          <AppButton $open aria-label="Tableau"><Tableau /></AppButton>
          <AppButton $open aria-label="Code"><VsCode /></AppButton>
          <AppButton $active aria-label="Chrome window"><Chrome /></AppButton>
        </AppRow>
        <Tray>
          <TrayItem $w={48} aria-label="People"><svg width="14" height="16" viewBox="0 0 14 16" fill="none" stroke="#fff" strokeWidth="1.200"><circle cx="9.500" cy="3.500" r="2.700" /><circle cx="4.500" cy="8.500" r="2.500" /><path d="M.8 15c0-5 7-5 7.200 0M8 7.500c3-1.500 5 .5 5.200 3.500" /></svg></TrayItem>
          <TrayItem $w={24} aria-label="Hidden icons"><svg width="12" height="7" viewBox="0 0 12 7" fill="none" stroke="#fff" strokeWidth="1.200"><path d="m1 6 5-5 5 5" /></svg></TrayItem>
          <TrayItem $w={24} aria-label="Battery"><svg width="16" height="13" viewBox="0 0 16 13"><path d="M1.500 1.500h12v7h-12Z" fill="none" stroke="#fff" strokeWidth="1.200" /><path d="M3 3h5v4H3Z" fill="#fff" /><circle cx="11" cy="8.500" r="4.500" fill="#168a2d" /><path d="M11 5.500q3.500 3 0 5-3.500-2 0-5ZM11 9v3" fill="#fff" stroke="#fff" strokeWidth=".5" /></svg></TrayItem>
          <TrayItem $w={26} aria-label="Guard"><svg width="16" height="16" viewBox="0 0 16 16"><path d="M8 0 16 16H0Z" fill="#19c22f" /><path d="m8 6 3 7H5Z" fill="#0b4d12" /><path d="M8 0 0 16l5-3 3-7Z" fill="#5df26b" /></svg></TrayItem>
          <TrayItem $w={24} aria-label="Network"><svg width="13" height="13" viewBox="0 0 13 13" fill="none" stroke="#ccc" strokeWidth="1.200"><path d="M1 12C1 5 5 1 12 1M4 12c0-5 3-8 8-8M7 12c0-3 2-5 5-5" /><circle cx="11" cy="11" r="1.500" fill="#fff" stroke="none" /></svg></TrayItem>
          <TrayItem $w={31}>ENG</TrayItem>
          <Clock>14:12<br />11-04-2023</Clock>
          <TrayItem $w={44} aria-label="Notifications">
            <svg width="26" height="25" viewBox="0 0 26 25"><path d="M1 0h16v12H9l-4 4v-4H1Z" fill="#fff" /><path d="M4 3.500h10M4 6.500h10M4 9.500h6" stroke="#222" /><circle cx="17" cy="16" r="8" fill="#333" stroke="#888" /><text x="17" y="20" fontSize="12" fill="#fff" textAnchor="middle" fontFamily="Open Sans, sans-serif">3</text></svg>
          </TrayItem>
          <ShowDesktop aria-label="Show desktop" />
        </Tray>
      </Taskbar>
    </Desktop>
  );
}
